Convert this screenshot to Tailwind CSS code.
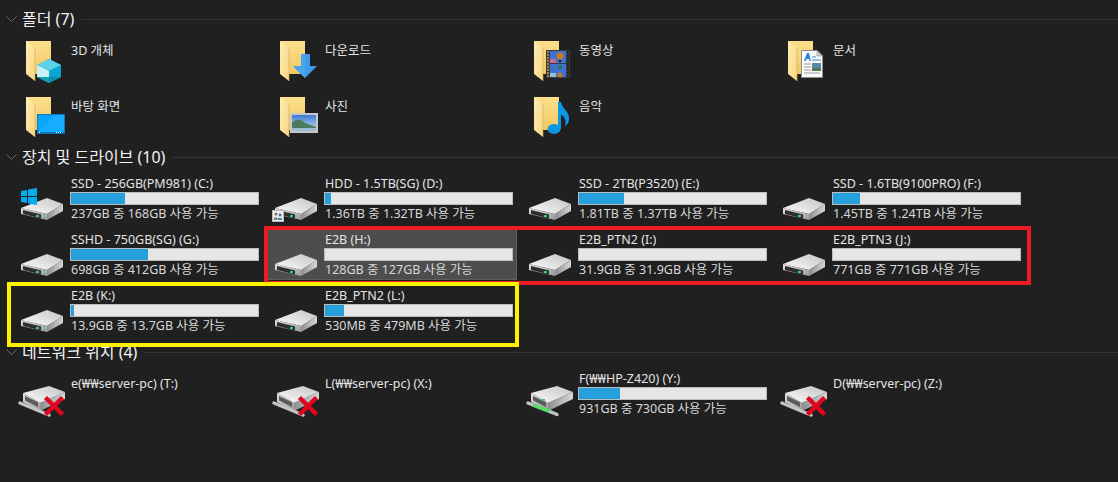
<!DOCTYPE html>
<html lang="ko">
  <head>
    <meta charset="UTF-8" />
    <title>내 PC</title>
    <script src="https://cdn.jsdelivr.net/npm/@tailwindcss/browser@4"></script>
  </head>
  <body class="bg-[#202020] overflow-hidden">
    <!-- shared icon parts -->
    <svg class="absolute w-0 h-0" aria-hidden="true">
      <defs>
        <linearGradient id="folderBack" x1="0" y1="0" x2="0" y2="1"><stop offset="0" stop-color="#fbdf8e" /><stop offset="1" stop-color="#f3c862" /></linearGradient>
        <linearGradient id="folderLeaf" x1="0" y1="0" x2="1" y2="1"><stop offset="0" stop-color="#ffeeb5" /><stop offset="1" stop-color="#f8d680" /></linearGradient>
        <linearGradient id="driveTop" x1="0" y1="1" x2="1" y2="0"><stop offset="0" stop-color="#fdfdfd" /><stop offset="1" stop-color="#c4c4c4" /></linearGradient>
        <linearGradient id="driveSide" x1="0" y1="0" x2="1" y2="0"><stop offset="0" stop-color="#8f8f8f" /><stop offset="1" stop-color="#d6d6d6" /></linearGradient>
        <linearGradient id="driveFront" x1="0" y1="0" x2="1" y2="1"><stop offset="0" stop-color="#e2e2e2" /><stop offset="1" stop-color="#9a9a9a" /></linearGradient>
        <linearGradient id="sky" x1="0" y1="0" x2="0" y2="1"><stop offset="0" stop-color="#3f78d8" /><stop offset="1" stop-color="#cfe3ee" /></linearGradient>

        <symbol id="folder" viewBox="0 0 55 50">
          <rect x="10" y="5" width="25" height="33" fill="url(#folderBack)" />
          <path d="M10 5 19 12V45L10 38Z" fill="url(#folderLeaf)" />
          <path d="M19 12V45" stroke="#c9a85a" stroke-width=".6" />
        </symbol>

        <symbol id="drive" viewBox="0 0 55 50">
          <path d="M5 34 31 24 47 30 31 40Z" fill="url(#driveTop)" />
          <path d="M31 40 47 30V37L31 46Z" fill="url(#driveSide)" />
          <path d="M5 34 31 40V46L5 40Z" fill="url(#driveFront)" />
          <path d="M7 36 25 40.500V44.500L7 40Z" fill="#2e2e2e" />
          <rect x="20" y="41" width="3" height="2" fill="#2fd84a" />
        </symbol>

        <symbol id="netdrive" viewBox="0 0 55 50">
          <path d="M7 24 33 17 49 23 24 34Z" fill="url(#driveTop)" />
          <path d="M24 34 49 23V30L24 42Z" fill="url(#driveSide)" />
          <path d="M7 24 24 34V42L7 33Z" fill="url(#driveFront)" />
          <path d="M9 27 22 33.500V38L9 31.500Z" fill="#5a5a5a" />
        </symbol>

        <symbol id="redx" viewBox="0 0 55 50">
          <path d="M29.500 28.500 46.500 45.500M46.500 28.500 29.500 45.500" stroke="#e0061f" stroke-width="4.500" fill="none" />
        </symbol>
      </defs>
    </svg>

    <div class="relative w-[1118px] h-[482px] font-['Noto_Sans','Noto_Sans_CJK_KR',sans-serif] text-[12.5px] text-[#e4e4e4]">
      <!-- 폴더 -->
      <section class="pt-[9px]">
        <div class="flex items-center h-[20px] pl-[6px]">
          <svg class="w-[11px] h-[7px] mr-[5px]" viewBox="0 0 11 7"><path d="M.5.5 5.500 5.500 10.500.5" stroke="#6a6a6a" fill="none" /></svg>
          <span class="text-[16px] text-[#f2f2f2] leading-[20px]">폴더 (7)</span>
          <div class="flex-1 h-px bg-[#333333] ml-[7px]"></div>
        </div>
        <div class="grid grid-cols-[repeat(4,249px)] gap-x-[5px] gap-y-[6px] px-[14px] mt-[7px]">
          <div class="flex h-[50px] pl-[2px]">
            <svg class="w-[55px] h-[50px] shrink-0" viewBox="0 0 55 50">
              <use href="#folder" />
              <path d="M33 23 45 29V41L33 47 21 41V29Z" fill="#18b4d4" />
              <path d="M33 23 45 29 33 35 21 29Z" fill="#5ed2e8" />
              <path d="M21 29 33 35V41L21 41Z" fill="#c9f2f6" />
              <path d="M21 41 33 41V47Z" fill="#149fb0" />
              <path d="M33 35 45 29V41L33 41Z" fill="#0aa6d2" />
              <path d="M33 41H45L33 47Z" fill="#0e8ea6" />
            </svg>
            <span class="pt-[6px] leading-[18px]">3D 개체</span>
          </div>
          <div class="flex h-[50px] pl-[2px]">
            <svg class="w-[55px] h-[50px] shrink-0" viewBox="0 0 55 50">
              <use href="#folder" />
              <path d="M31 18H40V30H47L35 42 23 30H31Z" fill="#3d9be9" />
              <path d="M31 18H35V42L23 30H31Z" fill="#4aa5ee" />
            </svg>
            <span class="pt-[6px] leading-[18px]">다운로드</span>
          </div>
          <div class="flex h-[50px] pl-[2px]">
            <svg class="w-[55px] h-[50px] shrink-0" viewBox="0 0 55 50">
              <use href="#folder" />
              <rect x="22" y="14" width="24" height="28" fill="#3a3a3a" />
              <path d="M23 16H25M23 19H25M23 22H25M23 25H25M23 28H25M23 31H25M23 34H25M23 37H25M23 40H25" stroke="#b99a5c" stroke-width="1.500" />
              <path d="M43 16H45M43 19H45M43 22H45M43 25H45M43 28H45M43 31H45M43 34H45M43 37H45M43 40H45" stroke="#1d1d1d" stroke-width="1.500" />
              <rect x="26" y="15" width="16" height="12" fill="#3f72cf" />
              <rect x="26" y="28" width="16" height="13" fill="#3f72cf" />
              <rect x="26" y="23" width="6" height="4" fill="#c86a8c" />
              <rect x="26" y="37" width="6" height="4" fill="#8ec0d8" />
              <circle cx="36" cy="20" r="3.500" fill="#c87a1c" />
              <rect x="35" y="24" width="2" height="2" fill="#151515" />
              <circle cx="36" cy="31" r="2" fill="#2a7a40" />
              <circle cx="36" cy="39" r="2.500" fill="#c87a1c" />
            </svg>
            <span class="pt-[6px] leading-[18px]">동영상</span>
          </div>
          <div class="flex h-[50px] pl-[2px]">
            <svg class="w-[55px] h-[50px] shrink-0" viewBox="0 0 55 50">
              <use href="#folder" />
              <path d="M23.500 14.500H39L44.500 20V41.500H23.500Z" fill="#fafafa" stroke="#8c8c8c" />
              <path d="M39 14.500V20H44.500Z" fill="#cfcfcf" stroke="#8c8c8c" stroke-width=".6" />
              <path d="M26 25 29 17H31L33 25H31.500L31 23H28.500L28 25Z" fill="#2b86d8" />
              <path d="M34 21H38M34 24H43" stroke="#2b86d8" />
              <path d="M26 28H33M26 31H33M26 34H33M26 37H42" stroke="#9a9a9a" />
              <rect x="34" y="27" width="9" height="8" fill="#5c86a8" />
              <rect x="34" y="32" width="9" height="3" fill="#4d7a58" />
            </svg>
            <span class="pt-[6px] leading-[18px]">문서</span>
          </div>
          <div class="flex h-[50px] pl-[2px]">
            <svg class="w-[55px] h-[50px] shrink-0" viewBox="0 0 55 50">
              <use href="#folder" />
              <rect x="21.500" y="22.500" width="27" height="19" fill="#09a4ff" stroke="#0c7cc0" />
              <path d="M22 40 40 23H48V40Z" fill="#19adff" />
              <path d="M22 40H48V42H22Z" fill="#0a75b8" />
              <path d="M23 40.500H24M40 40.500H41M42 40.500H43M44 40.500H45" stroke="#fff" />
            </svg>
            <span class="pt-[6px] leading-[18px]">바탕 화면</span>
          </div>
          <div class="flex h-[50px] pl-[2px]">
            <svg class="w-[55px] h-[50px] shrink-0" viewBox="0 0 55 50">
              <use href="#folder" />
              <rect x="20" y="21" width="28" height="20" fill="#c8c8c8" />
              <rect x="22" y="23" width="24" height="16" fill="url(#sky)" />
              <path d="M22 31C27 26 31 27 35 31L46 35V36H22Z" fill="#4c7b5b" />
              <rect x="22" y="36" width="24" height="3" fill="#9fbdd0" />
            </svg>
            <span class="pt-[6px] leading-[18px]">사진</span>
          </div>
          <div class="flex h-[50px] pl-[2px]">
            <svg class="w-[55px] h-[50px] shrink-0" viewBox="0 0 55 50">
              <use href="#folder" />
              <ellipse cx="30" cy="37" rx="6.500" ry="5" fill="#0a98e6" />
              <path d="M34 37V10H37C38 17 46 19 45 28 44.500 31 43 33 41 34 42.500 29 41 25 37 22.500V37Z" fill="#0a98e6" />
            </svg>
            <span class="pt-[6px] leading-[18px]">음악</span>
          </div>
        </div>
      </section>

      <!-- 장치 및 드라이브 -->
      <section class="mt-[5px]">
        <div class="flex items-center h-[20px] pl-[6px]">
          <svg class="w-[11px] h-[7px] mr-[5px]" viewBox="0 0 11 7"><path d="M.5.5 5.500 5.500 10.500.5" stroke="#6a6a6a" fill="none" /></svg>
          <span class="text-[16px] text-[#f2f2f2] leading-[20px]">장치 및 드라이브 (10)</span>
          <div class="flex-1 h-px bg-[#333333] ml-[7px]"></div>
        </div>
        <div class="grid grid-cols-[repeat(4,249px)] gap-x-[5px] gap-y-[6px] px-[14px] mt-[7px]">
          <div class="flex h-[50px] pl-[2px]">
            <svg class="w-[54px] h-[50px] shrink-0" viewBox="0 0 54 50">
              <use href="#drive" width="55" height="50" />
              <path d="M5 17 11 16V22H5ZM12 15.500 21 14V22H12ZM5 23H11V29L5 28ZM12 23H21V31L12 29.500Z" fill="#00adef" />
            </svg>
            <div>
              <div class="h-[18px] leading-[20px] pl-px">SSD - 256GB(PM981) (C:)</div>
              <div class="w-[189px] h-[13px] bg-[#e6e6e6] border border-[#bcbcbc]"><div class="h-full bg-[#26a0da] w-[29%]"></div></div>
              <div class="h-[17px] leading-[17px] pl-px text-[#d8d8d8]">237GB 중 168GB 사용 가능</div>
            </div>
          </div>
          <div class="flex h-[50px] pl-[2px]">
            <svg class="w-[54px] h-[50px] shrink-0" viewBox="0 0 54 50">
              <use href="#drive" width="55" height="50" />
              <rect x="2.500" y="36.500" width="11" height="11" fill="#efefef" stroke="#bbb" />
              <circle cx="6" cy="40" r="1.500" fill="#8a6a4c" />
              <circle cx="10" cy="41" r="1.500" fill="#3e6f9c" />
              <path d="M4 46V43.500H7.500V46Z" fill="#6a8a6a" />
              <path d="M8 46V44H12V46Z" fill="#3e8ab0" />
            </svg>
            <div>
              <div class="h-[18px] leading-[20px] pl-px">HDD - 1.5TB(SG) (D:)</div>
              <div class="w-[189px] h-[13px] bg-[#e6e6e6] border border-[#bcbcbc]"><div class="h-full bg-[#26a0da] w-[3%]"></div></div>
              <div class="h-[17px] leading-[17px] pl-px text-[#d8d8d8]">1.36TB 중 1.32TB 사용 가능</div>
            </div>
          </div>
          <div class="flex h-[50px] pl-[2px]">
            <svg class="w-[54px] h-[50px] shrink-0" viewBox="0 0 54 50"><use href="#drive" width="55" height="50" /></svg>
            <div>
              <div class="h-[18px] leading-[20px] pl-px">SSD - 2TB(P3520) (E:)</div>
              <div class="w-[189px] h-[13px] bg-[#e6e6e6] border border-[#bcbcbc]"><div class="h-full bg-[#26a0da] w-[24%]"></div></div>
              <div class="h-[17px] leading-[17px] pl-px text-[#d8d8d8]">1.81TB 중 1.37TB 사용 가능</div>
            </div>
          </div>
          <div class="flex h-[50px] pl-[2px]">
            <svg class="w-[54px] h-[50px] shrink-0" viewBox="0 0 54 50"><use href="#drive" width="55" height="50" /></svg>
            <div>
              <div class="h-[18px] leading-[20px] pl-px">SSD - 1.6TB(9100PRO) (F:)</div>
              <div class="w-[189px] h-[13px] bg-[#e6e6e6] border border-[#bcbcbc]"><div class="h-full bg-[#26a0da] w-[14.500%]"></div></div>
              <div class="h-[17px] leading-[17px] pl-px text-[#d8d8d8]">1.45TB 중 1.24TB 사용 가능</div>
            </div>
          </div>
          <div class="flex h-[50px] pl-[2px]">
            <svg class="w-[54px] h-[50px] shrink-0" viewBox="0 0 54 50"><use href="#drive" width="55" height="50" /></svg>
            <div>
              <div class="h-[18px] leading-[20px] pl-px">SSHD - 750GB(SG) (G:)</div>
              <div class="w-[189px] h-[13px] bg-[#e6e6e6] border border-[#bcbcbc]"><div class="h-full bg-[#26a0da] w-[41%]"></div></div>
              <div class="h-[17px] leading-[17px] pl-px text-[#d8d8d8]">698GB 중 412GB 사용 가능</div>
            </div>
          </div>
          <div class="flex h-[50px] pl-[2px] bg-[#4d4d4d] shadow-[inset_-1px_-1px_0_#5e5e5e]">
            <svg class="w-[54px] h-[50px] shrink-0" viewBox="0 0 54 50"><use href="#drive" width="55" height="50" /></svg>
            <div>
              <div class="h-[18px] leading-[20px] pl-px">E2B (H:)</div>
              <div class="w-[189px] h-[13px] bg-[#e6e6e6] border border-[#bcbcbc]"></div>
              <div class="h-[17px] leading-[17px] pl-px text-[#d8d8d8]">128GB 중 127GB 사용 가능</div>
            </div>
          </div>
          <div class="flex h-[50px] pl-[2px]">
            <svg class="w-[54px] h-[50px] shrink-0" viewBox="0 0 54 50"><use href="#drive" width="55" height="50" /></svg>
            <div>
              <div class="h-[18px] leading-[20px] pl-px">E2B_PTN2 (I:)</div>
              <div class="w-[189px] h-[13px] bg-[#e6e6e6] border border-[#bcbcbc]"></div>
              <div class="h-[17px] leading-[17px] pl-px text-[#d8d8d8]">31.9GB 중 31.9GB 사용 가능</div>
            </div>
          </div>
          <div class="flex h-[50px] pl-[2px]">
            <svg class="w-[54px] h-[50px] shrink-0" viewBox="0 0 54 50"><use href="#drive" width="55" height="50" /></svg>
            <div>
              <div class="h-[18px] leading-[20px] pl-px">E2B_PTN3 (J:)</div>
              <div class="w-[189px] h-[13px] bg-[#e6e6e6] border border-[#bcbcbc]"></div>
              <div class="h-[17px] leading-[17px] pl-px text-[#d8d8d8]">771GB 중 771GB 사용 가능</div>
            </div>
          </div>
          <div class="flex h-[50px] pl-[2px]">
            <svg class="w-[54px] h-[50px] shrink-0" viewBox="0 0 54 50"><use href="#drive" width="55" height="50" /></svg>
            <div>
              <div class="h-[18px] leading-[20px] pl-px">E2B (K:)</div>
              <div class="w-[189px] h-[13px] bg-[#e6e6e6] border border-[#bcbcbc]"><div class="h-full bg-[#26a0da] w-[1.500%]"></div></div>
              <div class="h-[17px] leading-[17px] pl-px text-[#d8d8d8]">13.9GB 중 13.7GB 사용 가능</div>
            </div>
          </div>
          <div class="flex h-[50px] pl-[2px]">
            <svg class="w-[54px] h-[50px] shrink-0" viewBox="0 0 54 50"><use href="#drive" width="55" height="50" /></svg>
            <div>
              <div class="h-[18px] leading-[20px] pl-px">E2B_PTN2 (L:)</div>
              <div class="w-[189px] h-[13px] bg-[#e6e6e6] border border-[#bcbcbc]"><div class="h-full bg-[#26a0da] w-[10%]"></div></div>
              <div class="h-[17px] leading-[17px] pl-px text-[#d8d8d8]">530MB 중 479MB 사용 가능</div>
            </div>
          </div>
        </div>
      </section>

      <!-- 네트워크 위치 -->
      <section class="mt-[6px]">
        <div class="flex items-center h-[20px] pl-[6px]">
          <svg class="w-[11px] h-[7px] mr-[5px]" viewBox="0 0 11 7"><path d="M.5.5 5.500 5.500 10.500.5" stroke="#6a6a6a" fill="none" /></svg>
          <span class="text-[16px] text-[#f2f2f2] leading-[20px]">네트워크 위치 (4)</span>
          <div class="flex-1 h-px bg-[#333333] ml-[7px]"></div>
        </div>
        <div class="grid grid-cols-[repeat(4,249px)] gap-x-[5px] px-[14px] mt-[7px]">
          <div class="flex h-[50px] pl-[2px]">
            <svg class="w-[54px] h-[50px] shrink-0" viewBox="0 0 54 50">
              <use href="#netdrive" width="55" height="50" />
              <path d="M4 34 33 46" stroke="#c4c4c4" stroke-width="3.500" stroke-linecap="round" />
              <use href="#redx" width="55" height="50" />
            </svg>
            <span class="pt-[6px] leading-[18px] pl-px">e(₩₩server-pc) (T:)</span>
          </div>
          <div class="flex h-[50px] pl-[2px]">
            <svg class="w-[54px] h-[50px] shrink-0" viewBox="0 0 54 50">
              <use href="#netdrive" width="55" height="50" />
              <path d="M4 34 33 46" stroke="#c4c4c4" stroke-width="3.500" stroke-linecap="round" />
              <use href="#redx" width="55" height="50" />
            </svg>
            <span class="pt-[6px] leading-[18px] pl-px">L(₩₩server-pc) (X:)</span>
          </div>
          <div class="flex h-[50px] pl-[2px]">
            <svg class="w-[54px] h-[50px] shrink-0" viewBox="0 0 54 50">
              <use href="#netdrive" width="55" height="50" />
              <rect x="18" y="30" width="3" height="2" fill="#2fd84a" />
              <path d="M4 34 9 36" stroke="#c4c4c4" stroke-width="3.500" stroke-linecap="round" />
              <path d="M9 36 27 43" stroke="#58d868" stroke-width="3.500" />
              <path d="M27 43 33 45.500" stroke="#c4c4c4" stroke-width="3.500" stroke-linecap="round" />
            </svg>
            <div>
              <div class="h-[18px] leading-[20px] pl-px">F(₩₩HP-Z420) (Y:)</div>
              <div class="w-[189px] h-[13px] bg-[#e6e6e6] border border-[#bcbcbc]"><div class="h-full bg-[#26a0da] w-[22%]"></div></div>
              <div class="h-[17px] leading-[17px] pl-px text-[#d8d8d8]">931GB 중 730GB 사용 가능</div>
            </div>
          </div>
          <div class="flex h-[50px] pl-[2px]">
            <svg class="w-[54px] h-[50px] shrink-0" viewBox="0 0 54 50">
              <use href="#netdrive" width="55" height="50" />
              <path d="M4 34 33 46" stroke="#c4c4c4" stroke-width="3.500" stroke-linecap="round" />
              <use href="#redx" width="55" height="50" />
            </svg>
            <span class="pt-[6px] leading-[18px] pl-px">D(₩₩server-pc) (Z:)</span>
          </div>
        </div>
      </section>

      <!-- annotation boxes drawn over the screenshot -->
      <div class="absolute left-[264px] top-[226px] w-[767px] h-[59px] border-4 border-[#ed1c24]"></div>
      <div class="absolute left-[7px] top-[282px] w-[512px] h-[65px] border-4 border-[#fff200]"></div>
    </div>
  </body>
</html>
